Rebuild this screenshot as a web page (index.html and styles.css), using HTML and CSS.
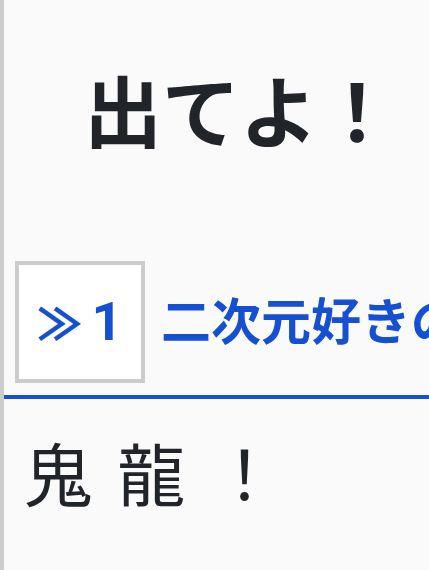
FILE: index.html
```html
<!DOCTYPE html>
<html lang="ja">
<head>
  <meta charset="UTF-8">
  <meta name="viewport" content="width=device-width, initial-scale=1.0">
  <title>出てよ！</title>
  <link rel="stylesheet" href="styles.css">
</head>
<body>
  <div class="page">
    <h1 class="title">出てよ！</h1>
    <h2 class="section">
      <span class="num"><span class="arrow">≫</span>1</span>
      <span class="section-title">二次元好きの匿名さん</span>
    </h2>
    <p class="post">鬼 龍 ！</p>
  </div>
</body>
</html>
```

FILE: styles.css
```css
html, body { margin:0; padding:0; background:#fafafa; color:#212529; font-family:'Noto Sans CJK JP','Noto Sans',sans-serif; overflow:hidden; }
.page { min-height:570px; border-left:4px solid #cccccc; box-sizing:border-box; overflow:hidden; }
.title { margin:0; padding:52px 0 0 80px; font-size:78px; font-weight:bold; line-height:1.45; }
.section { display:flex; align-items:center; gap:16px; margin:0; padding:96px 0 12px 11px; border-bottom:4px solid #1650d2; color:#1650d2; font-size:50px; font-weight:bold; white-space:nowrap; line-height:1; }
.num { display:flex; align-items:center; justify-content:center; width:122px; height:114px; flex:none; background:#fff; border:4px solid #cccccc; font-family:Roboto,'Noto Sans CJK JP',sans-serif; font-size:54px; }
.arrow { font-family:'Noto Sans CJK JP',sans-serif; font-size:44px; font-weight:900; margin-right:10px; }
.section-title { display:block; padding-bottom:8px; }
.post { margin:0; padding:24px 0 0 20px; font-size:68px; letter-spacing:5px; line-height:1.45; font-weight:normal; }
```
